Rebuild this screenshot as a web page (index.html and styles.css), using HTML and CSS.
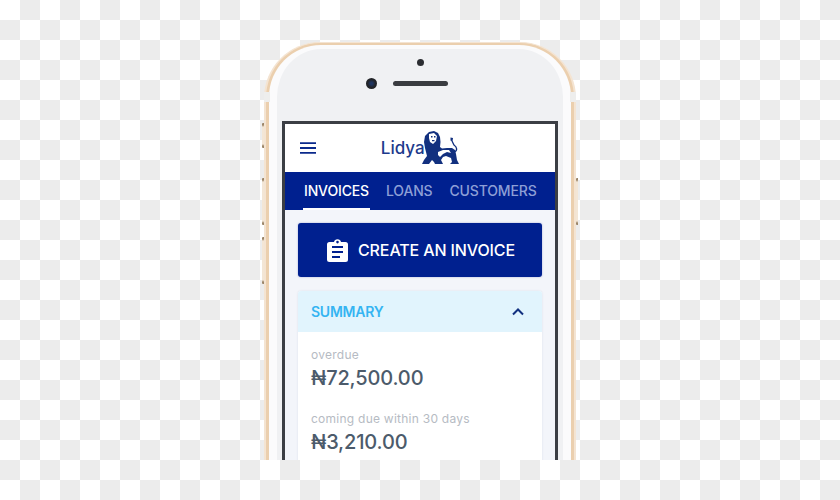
FILE: index.html
```html
<!DOCTYPE html>
<html>
  <head>
    <meta charset="utf-8" />
    <title>Lidya</title>
    <link rel="stylesheet" href="styles.css">
  </head>

  <body>
    <div class="stage">
      <div class="phone">
        <span class="side-btn side-mute"></span>
        <span class="side-btn side-up"></span>
        <span class="side-btn side-down"></span>
        <span class="side-btn side-power"></span>
        <span class="band band-left"></span>
        <span class="band band-right"></span>

        <div class="bezel">
          <div class="sensor"></div>
          <div class="speaker">
            <span class="camera"></span>
          </div>

          <div class="screen">
            <div class="topbar">
              <svg class="burger" width="16" height="12" viewBox="0 0 16 12">
                <path d="M0 1.200h16M0 6h16M0 10.800h16" stroke="#0b2a8c" stroke-width="1.800" />
              </svg>
              <div class="logo">
                <span class="logo-text">Lidya</span>
                <svg class="lion" width="38" height="36" viewBox="0 0 38 36">
                  <path fill="#12307f" d="M1 34l2-4 3-4-1-4-1-4-1-6 1-6 4-4 5-1 4 2 2 4 .5 5-.5 5 2 1.500 5-.5h5l3 2 1 4 1 6 2 4h-9l2-2-1-4-5-2-3 1-2 3 1 2 1 2H14l-1-2-2-2-3 4z" />
                  <path fill="none" stroke="#12307f" stroke-width="1.300" d="M33 22c4-1 3-5 0-7l-2-4" />
                  <path fill="#12307f" d="M29.500 7.500l2.500.5-.5 3.500-2-1z" />
                  <path fill="#fff" d="M8 4l5-1 3 3-1 5-3 3-3-2-1-4zM17 22l5-2h6l2 3-4-1-4 2-3 3-2-2z" />
                  <path fill="#12307f" d="M10 6h1.500v1.500H10zM13 6h1.500v1.500H13zM11 10h2.500v1.200H11z" />
                </svg>
              </div>
            </div>

            <div class="tabs">
              <span class="tab tab-active">INVOICES</span>
              <span class="tab">LOANS</span>
              <span class="tab">CUSTOMERS</span>
            </div>

            <div class="content">
              <div class="create-btn">
                <svg width="21" height="23" viewBox="0 0 21 23">
                  <path fill="#fff" fill-rule="evenodd" d="M2.500 3H7a3.600 3.600 0 0 1 7 0h4.500A2.500 2.500 0 0 1 21 5.500v15a2.500 2.500 0 0 1-2.500 2.500h-16A2.500 2.500 0 0 1 0 20.500v-15A2.500 2.500 0 0 1 2.500 3zM10.500 1.800a1.300 1.300 0 1 0 0 2.600 1.300 1.300 0 0 0 0-2.600zM5 7v2h11V7zM5 12v2h11v-2zM5 17v2h8v-2z" />
                </svg>
                <span>CREATE AN INVOICE</span>
              </div>

              <div class="card">
                <div class="card-head">
                  <span class="card-title">SUMMARY</span>
                  <svg width="12" height="8" viewBox="0 0 12 8">
                    <path d="M1 6.500l5-5 5 5" fill="none" stroke="#12307f" stroke-width="2" />
                  </svg>
                </div>
                <div class="card-body">
                  <p class="label">overdue</p>
                  <p class="amount">₦72,500.00</p>
                  <p class="label label-next">coming due within 30 days</p>
                  <p class="amount">₦3,210.00</p>
                </div>
              </div>
            </div>
          </div>
        </div>
      </div>
    </div>
  </body>
</html>
```
FILE: styles.css
```css
* {
  box-sizing: border-box;
}
html,
body {
  margin: 0;
  height: 500px;
  overflow: hidden;
}
body {
  background: conic-gradient(#ececec 25%, #fff 0 50%, #ececec 0 75%, #fff 0) 0 0 / 40px 40px;
  font-family: "Inter", "Liberation Sans", sans-serif;
}
p {
  margin: 0;
}
.stage {
  height: 460px;
  padding-top: 42px;
  display: flex;
  justify-content: center;
  overflow: hidden;
}
.phone {
  position: relative;
  width: 312px;
  height: 480px;
  padding: 2px 3px 0;
  border: solid #f4e4d2;
  border-width: 1px 2px 0;
  border-radius: 56px 56px 0 0;
  background: #ebcfae;
}
.bezel {
  height: 100%;
  padding: 0 5px;
  border: solid #fbfbfc;
  border-width: 4px 8px 0;
  border-radius: 52px 52px 0 0;
  background: #f0f1f3;
  display: flex;
  flex-direction: column;
  align-items: center;
}
.sensor {
  width: 7px;
  height: 7px;
  margin-top: 10px;
  border-radius: 50%;
  background: #2b2d31;
}
.speaker {
  position: relative;
  width: 55px;
  height: 5px;
  margin-top: 15px;
  border-radius: 3px;
  background: #3a3c40;
}
.camera {
  position: absolute;
  left: -27px;
  top: -3px;
  width: 11px;
  height: 11px;
  border-radius: 50%;
  background: radial-gradient(#1f3560 15%, #222428 50%);
}
.side-btn {
  position: absolute;
  left: -4px;
  width: 2px;
  background: linear-gradient(#9c8669 2px, #f3e6d6 4px, #f3e6d6 calc(100% - 4px), #9c8669 calc(100% - 2px));
  border-radius: 1px 0 0 1px;
}
.side-mute {
  top: 80px;
  height: 25px;
}
.side-up {
  top: 135px;
  height: 47px;
}
.side-down {
  top: 194px;
  height: 47px;
}
.side-power {
  left: auto;
  right: -4px;
  top: 135px;
  height: 47px;
}
.band {
  position: absolute;
  top: 49px;
  width: 6px;
  height: 10px;
  background: #eeeeed;
}
.band-left {
  left: -2px;
}
.band-right {
  right: -2px;
}
.screen {
  width: 276px;
  flex: 1;
  margin-top: 35px;
  border: 3px solid #3b3e44;
  border-bottom: 0;
  background: #f3f5fa;
}
.topbar {
  position: relative;
  height: 48px;
  background: #fff;
  display: flex;
  align-items: center;
  justify-content: center;
}
.burger {
  position: absolute;
  left: 15px;
  top: 18px;
}
.logo {
  display: flex;
  align-items: flex-end;
}
.logo-text {
  margin-right: -3.500px;
  margin-bottom: 8px;
  font-size: 17px;
  font-weight: 500;
  color: #1c3a8c;
}
.tabs {
  height: 38px;
  padding: 0 18px;
  background: #00208f;
  display: flex;
  gap: 15px;
}
.tab {
  padding: 0 1px;
  font-size: 14px;
  font-weight: 500;
  letter-spacing: -0.15px;
  line-height: 38px;
  color: #8d9fd6;
}
.tab-active {
  color: #fff;
  border-bottom: 2px solid #fff;
}
.content {
  padding: 13px 13px 0;
}
.create-btn {
  height: 54px;
  padding-left: 2px;
  border-radius: 3px;
  background: #00208f;
  color: #fff;
  font-size: 16px;
  font-weight: 500;
  letter-spacing: -0.12px;
  display: flex;
  align-items: center;
  justify-content: center;
  gap: 10px;
  box-shadow: 0 0 2px rgba(0, 32, 143, 0.35);
}
.card {
  height: 200px;
  margin-top: 14px;
  border-radius: 3px 3px 0 0;
  background: #fff;
  box-shadow: 0 0 2px rgba(60, 80, 140, 0.15);
}
.card-head {
  height: 41px;
  padding: 0 18px 0 13px;
  border-radius: 3px 3px 0 0;
  background: #e1f4fd;
  color: #35b4f2;
  font-size: 14px;
  font-weight: 600;
  display: flex;
  align-items: center;
  justify-content: space-between;
}
.card-title {
  letter-spacing: -0.25px;
}
.card-body {
  padding: 15px 13px 0;
}
.label {
  font-size: 12px;
  letter-spacing: 0.25px;
  line-height: 16px;
  color: #b6bbc3;
}
.label-next {
  margin-top: 20px;
}
.amount {
  margin-top: 2px;
  font-size: 20px;
  font-weight: 500;
  letter-spacing: -0.15px;
  line-height: 26px;
  color: #4c5b6b;
}
```
